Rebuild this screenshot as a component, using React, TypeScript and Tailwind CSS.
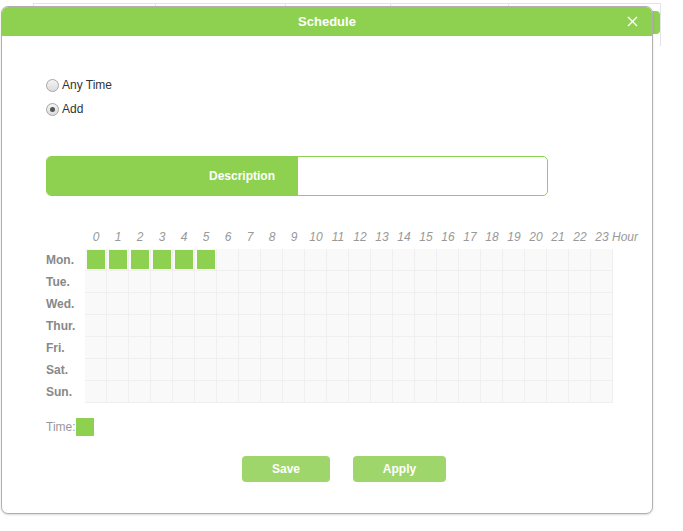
import React, { useState } from "react";

const days = ["Mon.", "Tue.", "Wed.", "Thur.", "Fri.", "Sat.", "Sun."];
const hours = Array.from({ length: 24 }, (_, i) => i);

// initial selection: Monday 0h-5h
const initialSlots: Record<string, boolean> = {};
for (let h = 0; h < 6; h++) initialSlots[`0-${h}`] = true;

const Radio = ({ checked, label, onClick }: { checked: boolean; label: string; onClick: () => void }) => (
  <label className="flex items-center h-[24px] cursor-pointer" onClick={onClick}>
    <span className="w-[13px] h-[13px] rounded-full border border-[#a6a6a6] bg-gradient-to-b from-[#f4f4f4] to-[#dcdcdc] flex items-center justify-center">
      {checked && <span className="w-[5px] h-[5px] rounded-full bg-[#555]" />}
    </span>
    <span className="ml-[3px] text-[12px] text-[#333]">{label}</span>
  </label>
);

export default function App() {
  const [mode, setMode] = useState<"any" | "add">("add");
  const [slots, setSlots] = useState(initialSlots);

  const toggle = (d: number, h: number) =>
    setSlots((s) => ({ ...s, [`${d}-${h}`]: !s[`${d}-${h}`] }));

  return (
    <div className="relative w-[683px] h-[531px] bg-white overflow-hidden" style={{ fontFamily: '"Liberation Sans", Arial, sans-serif' }}>
      {/* page table peeking out behind the dialog */}
      <div className="ml-[33px] w-[628px] h-[43px] border-t border-l border-r border-[#e3e3ea] mt-[3px] flex">
        <div className="w-[122px] border-r border-[#e3e3ea]" />
        <div className="w-[130px] border-r border-[#e3e3ea]" />
        <div className="w-[105px] border-r border-[#e3e3ea]" />
        <div className="w-[118px] border-r border-[#e3e3ea]" />
        <div className="flex-1 flex justify-end items-start pt-[7px]">
          <div className="w-[40px] h-[23px] rounded-[4px] bg-[#8ed150]" />
        </div>
      </div>

      {/* dialog */}
      <div className="absolute left-[1px] top-[6px] w-[652px] h-[508px] bg-white border border-[#b0b0b0] rounded-[7px] flex flex-col shadow-[0_1px_2px_rgba(0,0,0,0.15)]">
        <div className="h-[29px] bg-[#8ed150] rounded-t-[6px] relative flex items-center justify-center">
          <span className="text-white font-bold text-[13px]">Schedule</span>
          <button className="absolute right-[14px] top-[9px] w-[11px] h-[11px]">
            <svg viewBox="0 0 11 11" width="11" height="11">
              <path d="M1 1L10 10M10 1L1 10" stroke="#fff" strokeWidth="1.4" />
            </svg>
          </button>
        </div>

        <div className="pl-[44px] pt-[37px] flex flex-col">
          <Radio checked={mode === "any"} label="Any Time" onClick={() => setMode("any")} />
          <Radio checked={mode === "add"} label="Add" onClick={() => setMode("add")} />

          {/* description field */}
          <div className="mt-[35px] w-[502px] h-[40px] flex rounded-[5px] border border-[#8ed150] overflow-hidden">
            <div className="w-[251px] bg-[#8ed150] flex items-center justify-end pr-[23px]">
              <span className="text-white font-bold text-[12px]">Description</span>
            </div>
            <input className="flex-1 outline-none px-2 text-[12px]" />
          </div>

          {/* week/hour grid */}
          <div className="mt-[30px] flex flex-col">
            <div className="flex h-[22px] items-center">
              <div className="w-[39px]" />
              {hours.map((h) => (
                <div key={h} className="w-[22px] text-center text-[12px] italic text-[#999]">
                  {h}
                </div>
              ))}
              <div className="text-[12px] italic text-[#999] ml-[-1px]">Hour</div>
            </div>
            <div className="mt-[1px] flex flex-col">
              {days.map((d, di) => (
                <div key={d} className="flex h-[22px]">
                  <div className="w-[39px] flex items-center text-[12px] font-bold text-[#888]">{d}</div>
                  {hours.map((h) => (
                    <div
                      key={h}
                      onClick={() => toggle(di, h)}
                      className="w-[22px] h-[22px] border-r border-b border-[#efefef] bg-[#f9f9f9] pl-[2px] pt-[1px] pr-[1px] pb-[1px] cursor-pointer"
                    >
                      {slots[`${di}-${h}`] && <div className="w-full h-full bg-[#8ed150]" />}
                    </div>
                  ))}
                </div>
              ))}
            </div>
          </div>

          <div className="mt-[15px] flex items-center h-[18px]">
            <span className="text-[12px] text-[#999]">Time:</span>
            <span className="w-[18px] h-[18px] bg-[#8ed150]" />
          </div>

          <div className="mt-[20px] flex pl-[196px] gap-[23px]">
            <button className="w-[88px] h-[26px] rounded-[4px] bg-[#9fd66b] text-white font-bold text-[12px]">Save</button>
            <button className="w-[93px] h-[26px] rounded-[4px] bg-[#9fd66b] text-white font-bold text-[12px]">Apply</button>
          </div>
        </div>
      </div>
    </div>
  );
}
